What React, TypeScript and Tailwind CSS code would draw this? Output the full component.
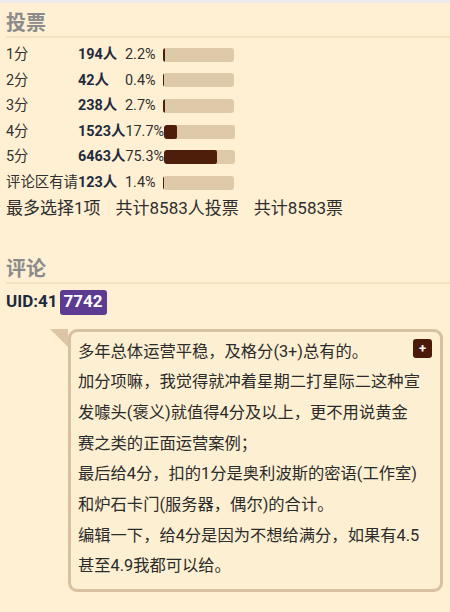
import React from "react";

const rows = [
  { label: "1分", count: "194人", pct: "2.2%", v: 2.2 },
  { label: "2分", count: "42人", pct: "0.4%", v: 0.4 },
  { label: "3分", count: "238人", pct: "2.7%", v: 2.7 },
  { label: "4分", count: "1523人", pct: "17.7%", v: 17.7 },
  { label: "5分", count: "6463人", pct: "75.3%", v: 75.3 },
  { label: "评论区有请", count: "123人", pct: "1.4%", v: 1.4 },
];

const font = { fontFamily: "Roboto, 'Noto Sans CJK SC', sans-serif" };

const lines = [
  "多年总体运营平稳，及格分(3+)总有的。",
  "加分项嘛，我觉得就冲着星期二打星际二这种宣",
  "发噱头(褒义)就值得4分及以上，更不用说黄金",
  "赛之类的正面运营案例；",
  "最后给4分，扣的1分是奥利波斯的密语(工作室)",
  "和炉石卡门(服务器，偶尔)的合计。",
  "编辑一下，给4分是因为不想给满分，如果有4.5",
  "甚至4.9我都可以给。",
];

export default function App() {
  return (
    <div className="w-[450px] min-h-[612px] bg-[#ececec] pt-[3px]" style={font}>
      <div className="min-h-[609px] bg-[#fff0d3] pl-[6px] pb-[10px] overflow-hidden">
        <h2 className="pt-[7px] text-[20px] leading-[26px] font-bold text-[#8b8b8b] border-b-2 border-[#f5e0c0]">
          投票
        </h2>
        <div className="mt-[4px]">
          {rows.map((r) => (
            <div key={r.label} className="flex items-center h-[25.6px] text-[14.4px] text-[#303030]">
              <span className="min-w-[72px]">{r.label}</span>
              <span className="min-w-[47px] font-bold text-[#1f2b3e]">{r.count}</span>
              <span className="min-w-[38px]">{r.pct}</span>
              <div className="w-[71px] h-[14px] rounded-[3px] bg-[#decaa9] overflow-hidden">
                <div className="h-full rounded-[2px] bg-[#4f1e0b]" style={{ width: `${r.v}%` }} />
              </div>
            </div>
          ))}
        </div>
        <div className="text-[17px] leading-[25px] text-[#2e2e2e] whitespace-nowrap">
          <span>最多选择1项</span>
          <span className="ml-[15px]">共计8583人投票</span>
          <span className="ml-[15px]">共计8583票</span>
        </div>
        <h2 className="mt-[35px] text-[20px] leading-[26px] font-bold text-[#8b8b8b] border-b-2 border-[#f5e0c0]">
          评论
        </h2>
        <div className="mt-[6px] flex items-center h-[25px]">
          <span className="text-[17px] font-bold text-[#1e2a3f]">UID:41</span>
          <span className="ml-[2px] h-[25px] px-[4px] flex items-center rounded-[3px] bg-[#5c3b91] text-white font-bold text-[17px]">
            7742
          </span>
        </div>
        <div className="relative mt-[14px] ml-[62px] mr-[7px] border-[3px] border-[#d8c1a1] rounded-[9px] bg-[#fdefd1] pl-[7px] pr-[8px] pt-[5px] pb-[7px] text-[16.3px] leading-[30.7px] text-[#2b2b2b]">
          <div className="absolute -left-[21px] -top-[3px] w-0 h-0 border-t-[18px] border-l-[18px] border-t-[#dcc6a6] border-l-transparent" />
          <div className="absolute top-[7px] right-[8px] w-[19px] h-[19px] rounded-[3px] bg-[#4b1a0b] flex items-center justify-center text-white text-[13px] font-bold leading-none">
            +
          </div>
          {lines.map((l) => (
            <div key={l} className="whitespace-nowrap">
              {l}
            </div>
          ))}
        </div>
      </div>
    </div>
  );
}
